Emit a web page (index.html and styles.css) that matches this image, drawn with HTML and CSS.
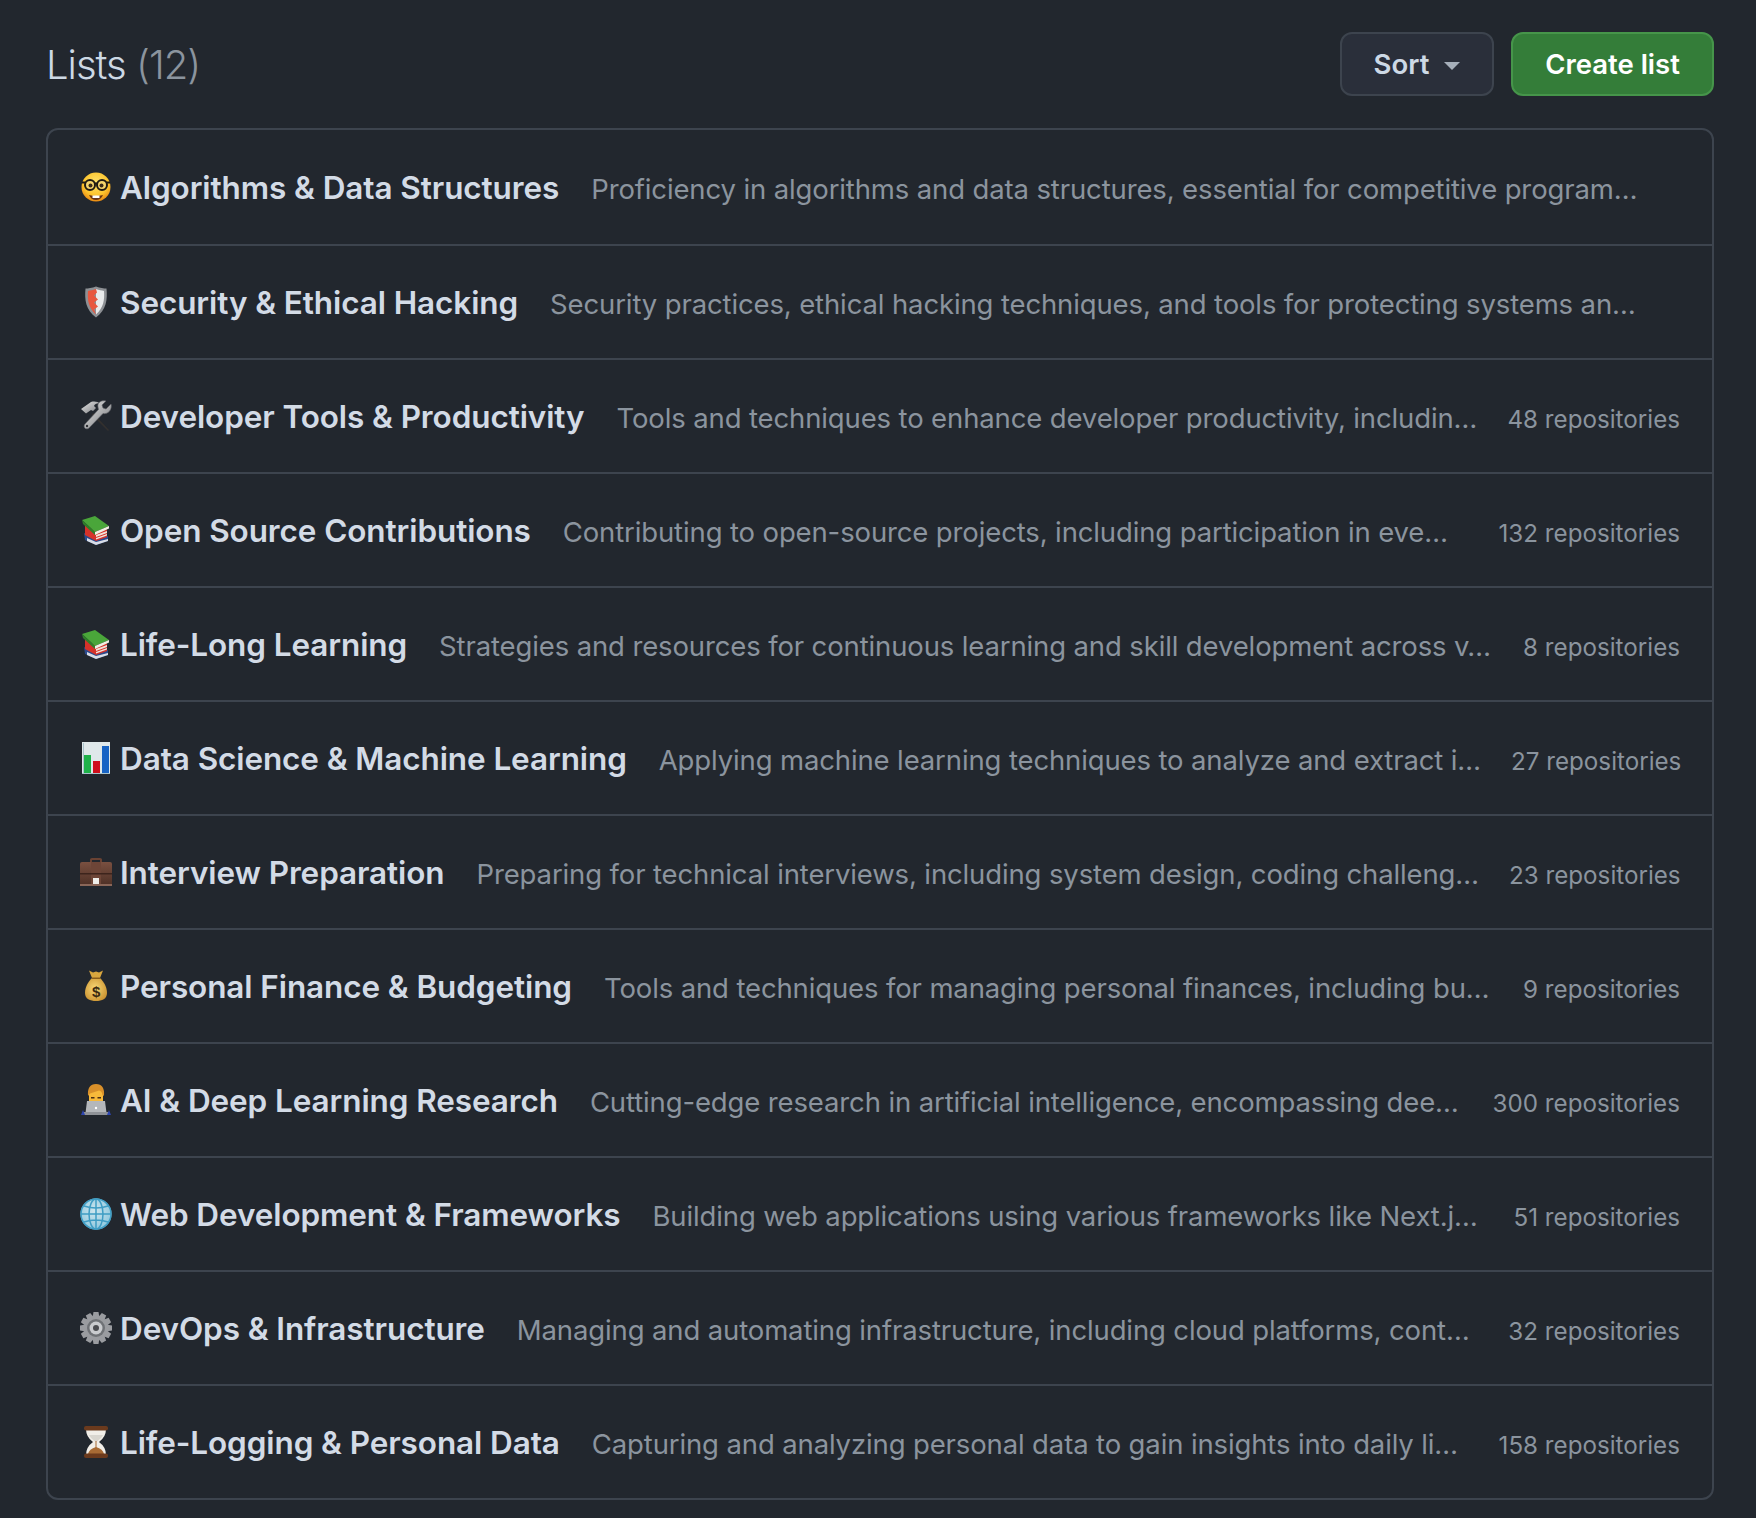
FILE: index.html
```html
<!DOCTYPE html>
<html lang="en">
<head>
<meta charset="utf-8">
<title>Lists</title>
<link rel="stylesheet" href="styles.css">
</head>
<body>
<svg class="defs" width="0" height="0" aria-hidden="true">
  <defs>
    <radialGradient id="face" cx="50%" cy="35%" r="65%"><stop offset="0" stop-color="#ffe36b"/><stop offset=".65" stop-color="#fdc52e"/><stop offset="1" stop-color="#e98a12"/></radialGradient>
    <linearGradient id="steel" x1="0" y1="0" x2="1" y2="1"><stop offset="0" stop-color="#e6e6e6"/><stop offset="1" stop-color="#77797c"/></linearGradient>
    <linearGradient id="brief" x1="0" y1="0" x2="0" y2="1"><stop offset="0" stop-color="#7a5040"/><stop offset="1" stop-color="#4c2f25"/></linearGradient>
    <radialGradient id="bag" cx="45%" cy="45%" r="65%"><stop offset="0" stop-color="#f8d877"/><stop offset="1" stop-color="#c98f2c"/></radialGradient>
    <radialGradient id="globe" cx="45%" cy="40%" r="60%"><stop offset="0" stop-color="#cfe6ee"/><stop offset="1" stop-color="#8fc8de"/></radialGradient>
    <symbol id="books" viewBox="0 0 32 32">
      <path d="M4 19l12 6 12-3v5l-12 4-11-5z" fill="#2c4a8c"/>
      <path d="M7 24l9 4 12-3v2l-12 4-9-4z" fill="#d9dde6"/>
      <path d="M5 11l11 7 11-3v8l-11 4-11-6z" fill="#d6322a"/>
      <path d="M16 21l11-4v2l-11 4zM16 24l11-4v1.500l-11 4z" fill="#f2e3d8"/>
      <path d="M2 6l13-4 14 10-14 6z" fill="#4aa63a"/>
      <path d="M2 6l13 12v3L3 10z" fill="#2f7f2a"/>
      <path d="M15 18l14-6v2.500L15 21z" fill="#f1f0e4"/>
    </symbol>
  </defs>
</svg>
<main class="page">
  <header class="head">
    <h2 class="heading">Lists <span class="num">(12)</span></h2>
    <div class="actions">
      <button class="btn btn-sort" type="button">Sort <svg class="caret" viewBox="0 0 16 8" aria-hidden="true"><path d="M0 0h16L8 8z" fill="currentColor"/></svg></button>
      <button class="btn btn-create" type="button">Create list</button>
    </div>
  </header>
  <section class="box">
    <div class="row">
      <h3 class="title"><svg class="emoji" viewBox="0 0 32 32" aria-hidden="true"><circle cx="16" cy="16" r="14.500" fill="url(#face)"/><path d="M9 24q7 2 14 0-2 5-7 5t-7-5z" fill="#6b3414"/><path d="M12.500 24.500h7v2.500h-7z" fill="#fff"/><circle cx="10" cy="14" r="5" fill="#f6d46a" stroke="#211a12" stroke-width="2"/><circle cx="22" cy="14" r="5" fill="#f6d46a" stroke="#211a12" stroke-width="2"/><path d="M2 11.500h3.500M26.500 11.500H30M14.500 12.500h3" stroke="#211a12" stroke-width="2"/><circle cx="10.500" cy="14.500" r="2" fill="#3a2a1a"/><circle cx="21.500" cy="14.500" r="2" fill="#3a2a1a"/></svg>Algorithms &amp; Data Structures</h3>
      <p class="desc">Proficiency in algorithms and data structures, essential for competitive program…</p>
    </div>
    <div class="row">
      <h3 class="title"><svg class="emoji" viewBox="0 0 32 32" aria-hidden="true"><path d="M16 .5c4 1.500 8 2 10.500 2 1 11 0 21-10.500 29C5.500 23.500 4.500 13.500 5.500 2.500c2.500 0 6.500-.5 10.500-2z" fill="#8d9094"/><path d="M16 3c3 1 5.500 1.500 8 2 .7 9-.5 17-8 23.500z" fill="#e9ebec"/><path d="M16 3c-3 1-5.500 1.500-8 2-.7 9 .5 17 8 23.500l-2-5 4-3-4-4 4-3-4-4 3-3z" fill="#e8573f"/></svg>Security &amp; Ethical Hacking</h3>
      <p class="desc">Security practices, ethical hacking techniques, and tools for protecting systems an…</p>
    </div>
    <div class="row">
      <h3 class="title"><svg class="emoji" viewBox="0 0 32 32" aria-hidden="true"><path d="M13 13l16 17-1 1-16-16z" fill="#33302e"/><path d="M1 9l10-7c4-1 7 0 9 1.500-3-.5-5 .5-6 2.500l2 2-3 3-2-1-5 3.500z" fill="url(#steel)"/><path d="M31 4l-5 5-3-1-1-3 4-4c-4-1-9 1-8 6l.5 2.500L5 24c-2.500 3 1 6.500 4 4l14-14.500c5 1 9.500-4 8-9.500z" fill="url(#steel)" stroke="#5e6064" stroke-width=".6"/><circle cx="7" cy="26" r="1.200" fill="#2d2f33"/></svg>Developer Tools &amp; Productivity</h3>
      <p class="desc">Tools and techniques to enhance developer productivity, includin…</p>
      <span class="count">48 repositories</span>
    </div>
    <div class="row">
      <h3 class="title"><svg class="emoji" viewBox="0 0 32 32" aria-hidden="true"><use href="#books"/></svg>Open Source Contributions</h3>
      <p class="desc">Contributing to open-source projects, including participation in eve…</p>
      <span class="count">132 repositories</span>
    </div>
    <div class="row">
      <h3 class="title"><svg class="emoji" viewBox="0 0 32 32" aria-hidden="true"><use href="#books"/></svg>Life-Long Learning</h3>
      <p class="desc">Strategies and resources for continuous learning and skill development across v…</p>
      <span class="count">8 repositories</span>
    </div>
    <div class="row">
      <h3 class="title"><svg class="emoji" viewBox="0 0 32 32" aria-hidden="true"><path d="M2 0h28v32H2z" fill="#dfe8ea"/><path d="M3 1h1v30H3zM2 31h28v1H2z" fill="#a9c3cc"/><path d="M4 13h7v18H4z" fill="#1fb24a"/><path d="M13 19h7v12h-7z" fill="#cf0f1c"/><path d="M22 4h7v27h-7z" fill="#1763c4"/></svg>Data Science &amp; Machine Learning</h3>
      <p class="desc">Applying machine learning techniques to analyze and extract i…</p>
      <span class="count">27 repositories</span>
    </div>
    <div class="row">
      <h3 class="title"><svg class="emoji" viewBox="0 0 32 32" aria-hidden="true"><path d="M10 7V3.500Q10 2 12 2h8q2 0 2 1.500V7h-2V4h-8v3z" fill="#6a4233"/><rect y="6" width="32" height="24" rx="2" fill="url(#brief)"/><path d="M11 6h10v24H11z" fill="#6d4537"/><path d="M0 17h32v1.500H0z" fill="#3d241c"/><path d="M13 22h6v7h-6z" fill="#efeeea"/><path d="M0 28h32v2H0z" fill="#8a6658"/></svg>Interview Preparation</h3>
      <p class="desc">Preparing for technical interviews, including system design, coding challeng…</p>
      <span class="count">23 repositories</span>
    </div>
    <div class="row">
      <h3 class="title"><svg class="emoji" viewBox="0 0 32 32" aria-hidden="true"><path d="M9 .5l4 2 3-1 3 1 4-2-3 7.500h-8z" fill="#d9a63e"/><path d="M12 8c-4 4-7 9-7 15 0 6 5 8 11 8s11-2 11-8c0-6-3-11-7-15z" fill="url(#bag)"/><path d="M12 7.500h8v1.500h-8z" fill="#8a5c19"/><text class="dollar" x="16" y="27" text-anchor="middle">$</text></svg>Personal Finance &amp; Budgeting</h3>
      <p class="desc">Tools and techniques for managing personal finances, including bu…</p>
      <span class="count">9 repositories</span>
    </div>
    <div class="row">
      <h3 class="title"><svg class="emoji" viewBox="0 0 32 32" aria-hidden="true"><path d="M9 10q0-8 7-8t7 8v7H9z" fill="#f7b93a"/><path d="M8 12Q7 0 16 0t8 12l-1.500-1Q22 7 19 6.500l-9 3z" fill="#d9902a"/><path d="M11 13h3.500v1.500H11zM17.500 13H21v1.500h-3.500z" fill="#4a2e15"/><path d="M7 17h18l1.500 12h-21z" fill="#b4b7bb"/><path d="M3 28h26v3H3z" fill="#8f9297"/><path d="M3 26l-2 5h4zM29 26l2 5h-4z" fill="#2d45b0"/><circle cx="16" cy="24" r="1.200" fill="#fff"/></svg>AI &amp; Deep Learning Research</h3>
      <p class="desc">Cutting-edge research in artificial intelligence, encompassing dee…</p>
      <span class="count">300 repositories</span>
    </div>
    <div class="row">
      <h3 class="title"><svg class="emoji" viewBox="0 0 32 32" aria-hidden="true"><circle cx="16" cy="16" r="15.500" fill="url(#globe)"/><g fill="none" stroke="#3f9dc4" stroke-width="1.500"><circle cx="16" cy="16" r="15"/><ellipse cx="16" cy="16" rx="7" ry="15"/><path d="M16 1v30M1 16h30M4 8q12 4 24 0M4 24q12-4 24 0"/></g></svg>Web Development &amp; Frameworks</h3>
      <p class="desc">Building web applications using various frameworks like Next.j…</p>
      <span class="count">51 repositories</span>
    </div>
    <div class="row">
      <h3 class="title"><svg class="emoji" viewBox="0 0 32 32" aria-hidden="true"><g fill="#9a9ca0"><circle cx="16" cy="16" r="12"/><path d="M13.500 0h5l1 6h-7z"/><path d="M13.500 0h5l1 6h-7z" transform="rotate(30 16 16)"/><path d="M13.500 0h5l1 6h-7z" transform="rotate(60 16 16)"/><path d="M13.500 0h5l1 6h-7z" transform="rotate(90 16 16)"/><path d="M13.500 0h5l1 6h-7z" transform="rotate(120 16 16)"/><path d="M13.500 0h5l1 6h-7z" transform="rotate(150 16 16)"/><path d="M13.500 0h5l1 6h-7z" transform="rotate(180 16 16)"/><path d="M13.500 0h5l1 6h-7z" transform="rotate(210 16 16)"/><path d="M13.500 0h5l1 6h-7z" transform="rotate(240 16 16)"/><path d="M13.500 0h5l1 6h-7z" transform="rotate(270 16 16)"/><path d="M13.500 0h5l1 6h-7z" transform="rotate(300 16 16)"/><path d="M13.500 0h5l1 6h-7z" transform="rotate(330 16 16)"/></g><circle cx="16" cy="16" r="9" fill="#6f7276"/><circle cx="16" cy="16" r="6.500" fill="#c9cbce"/><circle cx="16" cy="16" r="3" fill="#4a4c50"/></svg>DevOps &amp; Infrastructure</h3>
      <p class="desc">Managing and automating infrastructure, including cloud platforms, cont…</p>
      <span class="count">32 repositories</span>
    </div>
    <div class="row">
      <h3 class="title"><svg class="emoji" viewBox="0 0 32 32" aria-hidden="true"><path d="M6 3h20q0 8-7 13 7 5 7 13H6q0-8 7-13-7-5-7-13z" fill="#f1eee8"/><path d="M9 9h14q-1 3-7 7-6-4-7-7z" fill="#d9d6cf"/><path d="M8 28q1-5 8-7 7 2 8 7z" fill="#a86b35"/><path d="M15.500 15h1v8h-1z" fill="#a86b35"/><rect x="4" y="0" width="24" height="4.500" rx="2" fill="#6b3a1d"/><rect x="4" y="27.500" width="24" height="4.500" rx="2" fill="#6b3a1d"/></svg>Life-Logging &amp; Personal Data</h3>
      <p class="desc">Capturing and analyzing personal data to gain insights into daily li…</p>
      <span class="count">158 repositories</span>
    </div>
  </section>
</main>
</body>
</html>
```

FILE: styles.css
```css
* { box-sizing: border-box; }
html, body { margin: 0; padding: 0; }
body {
  background: #22272e;
  font-family: Inter, "Liberation Sans", sans-serif;
  color: #cdd9e5;
}
.defs { position: absolute; }
.page { padding: 32px 42px 0 46px; }
.head { display: flex; align-items: center; justify-content: space-between; height: 64px; }
.heading { margin: 0; font-size: 40px; font-weight: 300; letter-spacing: -1px; color: #cdd9e5; }
.num { color: #8b949e; }
.actions { display: flex; gap: 17px; }
.btn {
  height: 64px;
  border-radius: 12px;
  font-family: inherit;
  font-size: 27.5px;
  font-weight: 600;
  display: flex;
  align-items: center;
  justify-content: center;
}
.btn-sort { width: 154px; gap: 15px; padding: 0; background: #2a2f3a; border: 2px solid #3d444e; color: #cdd9e5; }
.caret { width: 16px; height: 8px; color: #a6afba; margin-top: 4px; }
.btn-create { width: 203px; background: #347d39; border: 2px solid #46954a; color: #fff; }
.box { margin-top: 32px; border: 2px solid #3d444e; border-radius: 12px; }
.row {
  display: flex;
  align-items: center;
  gap: 30px;
  height: 114px;
  padding: 0 32px;
  border-top: 2px solid #3d444e;
}
.row:first-child { border-top: 0; }
.title {
  margin: 0 2px 0 0;
  display: flex;
  align-items: center;
  gap: 8px;
  font-size: 31.5px;
  font-weight: 600;
  letter-spacing: -0.1px;
  color: #d3dbe6;
  white-space: nowrap;
}
.emoji { width: 32px; height: 32px; flex: none; }
.dollar { font: 700 15px "Liberation Sans", sans-serif; fill: #3b2a10; }
.desc { margin: 4px 0 0; font-size: 27.5px; letter-spacing: -0.13px; color: #8b949e; white-space: nowrap; }
.count { margin: 6px 0 0 auto; font-size: 24.2px; color: #8b949e; white-space: nowrap; }
```
